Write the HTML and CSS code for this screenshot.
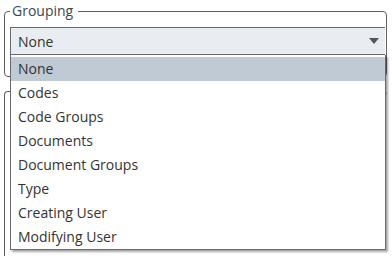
FILE: index.html
```html
<!doctype html>
<html lang="en">
<head>
  <meta charset="utf-8">
  <title>Grouping</title>
  <link rel="stylesheet" href="styles.css">
</head>
<body>
  <div class="page">
    <fieldset class="group">
      <legend>Grouping</legend>
      <div class="combo">
        <span class="combo-value">None</span>
        <svg class="combo-arrow" width="10" height="6" viewBox="0 0 10 6"><path d="M0 0H10L5 6Z" fill="#555"/></svg>
      </div>
    </fieldset>
    <div class="group next"></div>

    <ul class="droplist">
      <li class="selected">None</li>
      <li>Codes</li>
      <li>Code Groups</li>
      <li>Documents</li>
      <li>Document Groups</li>
      <li>Type</li>
      <li>Creating User</li>
      <li>Modifying User</li>
    </ul>
  </div>
</body>
</html>
```

FILE: styles.css
```css
html, body{
  margin: 0;
  padding: 0;
  background: #ffffff;
}
body{
  font-family: 'Open Sans', 'Noto Sans', sans-serif;
  font-size: 14px;
  color: #333333;
  overflow: hidden;
}
.page{
  position: relative;
  width: 392px;
  height: 256px;
  overflow: hidden;
  box-sizing: border-box;
  padding: 1px 5px 0 4px;
}
.group{
  margin: 0;
  padding: 6px 1px 21px 5px;
  border: 1px solid #606060;
  border-radius: 4px;
  min-width: 0;
}
.group legend{
  padding: 0 5px 0 2px;
  margin-left: 0;
  line-height: 20px;
  color: #3a4654;
}
.group.next{
  margin-top: 14px;
  height: 200px;
  padding: 0;
  border-right: none;
}
.combo{
  display: flex;
  align-items: center;
  height: 28px;
  box-sizing: border-box;
  padding: 0 5px 0 7px;
  background: #e9edf1;
  border: 1px solid #6a6a6a;
  border-right: none;
}
.combo-value{
  flex: 1;
}
.combo-arrow{
  margin-right: 1px;
}
.droplist{
  position: absolute;
  left: 10px;
  top: 55px;
  width: 376px;
  margin: 0;
  padding: 2px 0 0;
  list-style: none;
  background: #ffffff;
  border: 1px solid #6a6a6a;
  border-top: none;
  box-sizing: border-box;
  box-shadow: 2px 2px 2px rgba(0,0,0,0.35);
}
.droplist li{
  height: 24px;
  line-height: 24px;
  padding-left: 7px;
}
.droplist li.selected{
  background: #bfcad5;
}
```
